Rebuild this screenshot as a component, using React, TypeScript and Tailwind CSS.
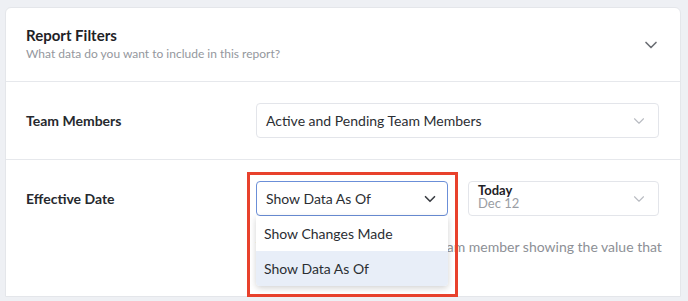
import { ChevronDown } from "lucide-react";

const FONT = { fontFamily: "Lato, 'Open Sans', sans-serif" };

function Select({ label }: { label: string }) {
  return (
    <div className="flex h-[35px] w-[403px] items-center justify-between rounded-[4px] border border-[#e3e5ea] bg-white pl-[9px] pr-[10px]">
      <span className="text-[14px] text-[#2b2e33]">{label}</span>
      <ChevronDown className="h-[18px] w-[18px] text-[#b9bcc2]" strokeWidth={1.5} />
    </div>
  );
}

export default function App() {
  return (
    <div className="h-[301px] w-[688px] overflow-hidden bg-[#eef0f4] pl-[5px] pr-[7px] pt-[7px]" style={FONT}>
      <div className="h-[290px] rounded-t-[6px] border border-[#e4e6ea] bg-white">
        {/* header */}
        <div className="flex h-[74px] items-center justify-between border-b border-[#e6e8ec] pl-[20px] pr-[19px]">
          <div className="pb-[2px]">
            <h2 className="text-[15px] font-bold leading-[19px] text-[#1f2226]">Report Filters</h2>
            <p className="text-[12px] leading-[17px] text-[#94979d]">What data do you want to include in this report?</p>
          </div>
          <ChevronDown className="h-[20px] w-[20px] text-[#6b6e74]" strokeWidth={2} />
        </div>

        {/* team members */}
        <div className="flex h-[78px] items-center border-b border-[#e6e8ec] pl-[20px]">
          <span className="w-[230px] text-[14px] font-bold text-[#26292e]">Team Members</span>
          <Select label="Active and Pending Team Members" />
        </div>

        {/* effective date */}
        <div className="flex pl-[20px] pt-[21px]">
          <span className="w-[230px] pt-[7px] text-[14px] font-bold text-[#26292e]">Effective Date</span>
          <div className="relative">
            <div className="flex gap-[20px]">
              <div className="flex h-[35px] w-[192px] items-center justify-between rounded-[4px] border border-[#6b8fd8] bg-white pl-[9px] pr-[8px]">
                <span className="text-[14px] text-[#2b2e33]">Show Data As Of</span>
                <ChevronDown className="h-[18px] w-[18px] text-[#3b3e44]" strokeWidth={2.2} />
              </div>
              <div className="flex h-[35px] w-[191px] items-center justify-between rounded-[4px] border border-[#e3e5ea] bg-white pl-[9px] pr-[10px]">
                <div className="flex flex-col pb-[3px] leading-[13px]">
                  <span className="text-[13px] font-bold text-[#1f2226]">Today</span>
                  <span className="text-[13px] text-[#9a9da3]">Dec 12</span>
                </div>
                <ChevronDown className="h-[18px] w-[18px] text-[#b9bcc2]" strokeWidth={1.5} />
              </div>
            </div>
            <p className="mt-[20px] whitespace-nowrap text-[14px] text-[#8d9096]">
              This shows one row for each team member showing the value that
            </p>

            {/* open menu */}
            <div className="absolute left-0 top-[35px] w-[192px] overflow-hidden rounded-b-[4px] bg-white shadow-[0_2px_6px_rgba(0,0,0,0.18)]">
              <div className="flex h-[35px] items-center pl-[8px] text-[14px] text-[#2b2e33]">Show Changes Made</div>
              <div className="flex h-[35px] items-center bg-[#e8eef8] pl-[8px] text-[14px] text-[#2b2e33]">Show Data As Of</div>
            </div>

            {/* highlight */}
            <div className="absolute left-[-9px] top-[-9px] h-[125px] w-[211px] border-[3px] border-[#e8412c]" />
          </div>
        </div>
      </div>
    </div>
  );
}
